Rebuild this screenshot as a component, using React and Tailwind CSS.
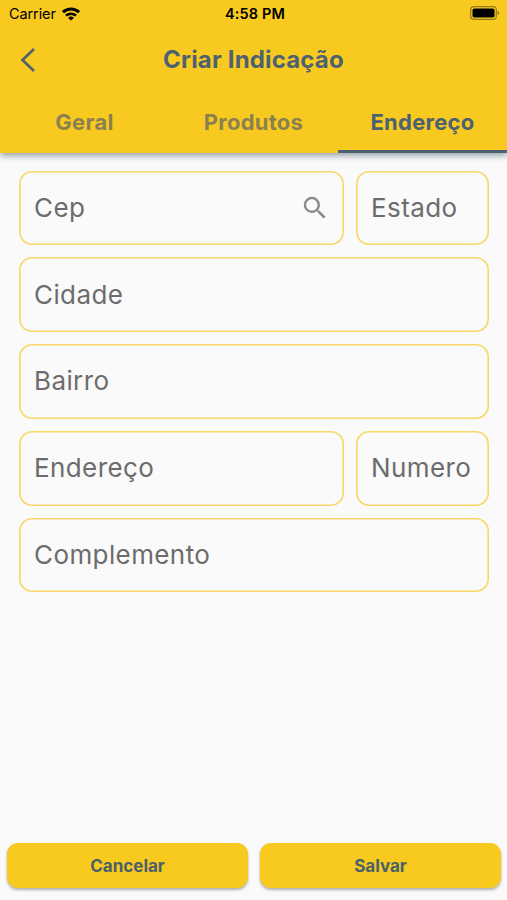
import React, { useState } from 'react';
import { MdSearch } from 'react-icons/md';

const TABS = ['Geral', 'Produtos', 'Endereço'];

const StatusBar = () => (
  <div className="grid grid-cols-3 items-center h-7 pl-[9px] pr-[6px] text-black">
    <div className="flex items-center gap-[6px]">
      <span className="text-[14.5px] leading-none tracking-[-0.1px]">Carrier</span>
      <svg width="18" height="14" viewBox="0 0 18 14" fill="none" stroke="currentColor" strokeWidth="3">
        <path d="M1 5.2a11.4 11.4 0 0 1 16 0" />
        <path d="M4 8.7a7.2 7.2 0 0 1 10 0" strokeWidth="2.4" />
        <path d="M9 13.6 6.1 10.9a4.1 4.1 0 0 1 5.8 0Z" fill="currentColor" stroke="none" />
      </svg>
    </div>
    <span className="text-center text-[14.5px] leading-none font-semibold tracking-[0.15px]">4:58 PM</span>
    <svg className="justify-self-end -translate-y-px" width="31" height="14" viewBox="0 0 31 14">
      <rect x="0.7" y="0.7" width="25.6" height="12.6" rx="3.4" fill="none" stroke="#000" strokeOpacity="0.4" strokeWidth="1.2" />
      <rect x="2.5" y="2.5" width="22" height="9" rx="1.8" />
      <path d="M27.7 4.8a2.4 2.4 0 0 1 0 4.4Z" fillOpacity="0.45" />
    </svg>
  </div>
);

const Field = ({ label, icon, className = '' }) => (
  <div
    className={`flex items-center justify-between h-[74.75px] pl-[15px] pr-[14px] rounded-[13px] inset-ring-[1.6px] inset-ring-[#f7d867] text-[#6c6c6c] ${className}`}
  >
    <span className="text-[26px] leading-none tracking-[0.4px]">{label}</span>
    {icon}
  </div>
);

const ActionButton = ({ children }) => (
  <button
    type="button"
    className="flex-1 h-[45px] pt-[3px] rounded-[11px] bg-[#f8ca20] text-[#4c6068] text-[17px] font-bold shadow-[0_2px_3px_rgba(0,0,0,0.3)]"
  >
    {children}
  </button>
);

const App = () => {
  const [activeTab, setActiveTab] = useState('Endereço');

  return (
    <div className="flex flex-col h-screen overflow-hidden bg-[#fafafa] font-['Inter','Liberation_Sans',sans-serif]">
      <header className="h-[153px] shrink-0 bg-[#f8ca20] shadow-[0_3px_6px_rgba(40,65,80,0.45)]">
        <StatusBar />

        <div className="grid grid-cols-[60px_1fr_60px] items-center h-[64px]">
          <button type="button" aria-label="Voltar" className="pl-5 text-[#4d6270]">
            <svg width="16" height="24" viewBox="0 0 16 24" fill="none" stroke="currentColor" strokeWidth="2.7">
              <path d="M14 1 2.5 12 14 23" />
            </svg>
          </button>
          <h1 className="text-center text-[24px] leading-none font-bold tracking-[0.17px] text-[#4d6270]">
            Criar Indicação
          </h1>
        </div>

        <nav className="grid grid-cols-3 h-[61px]">
          {TABS.map((tab) => (
            <button
              key={tab}
              type="button"
              onClick={() => setActiveTab(tab)}
              className={`pt-[2px] border-b-[3px] text-[22px] leading-none font-bold tracking-[0.25px] ${
                activeTab === tab ? 'border-[#4d6270] text-[#4d6270]' : 'border-transparent text-[#8b8150]'
              }`}
            >
              {tab}
            </button>
          ))}
        </nav>
      </header>

      <main className="flex flex-1 flex-col gap-3 pl-[19px] pr-[18px] pt-[17.5px]">
        <div className="flex gap-3">
          <Field label="Cep" className="flex-1" icon={<MdSearch className="size-[30px] text-[#8a8a8a]" />} />
          <Field label="Estado" className="w-[133px]" />
        </div>
        <Field label="Cidade" />
        <Field label="Bairro" />
        <div className="flex gap-3">
          <Field label="Endereço" className="flex-1" />
          <Field label="Numero" className="w-[133px]" />
        </div>
        <Field label="Complemento" />
      </main>

      <footer className="flex gap-3 pl-[7px] pr-[6px] pb-[12.5px]">
        <ActionButton>Cancelar</ActionButton>
        <ActionButton>Salvar</ActionButton>
      </footer>
    </div>
  );
};

export default App;
